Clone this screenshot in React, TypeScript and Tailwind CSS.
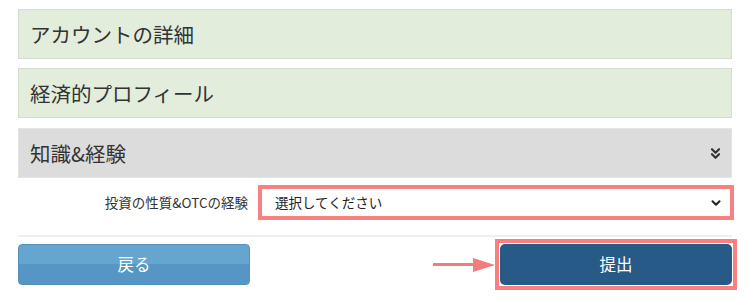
import React from "react";
import { ChevronsDown, ChevronDown } from "lucide-react";

export default function App() {
  return (
    <div className="w-[750px] h-[302px] bg-white overflow-hidden text-[#333] font-['Noto_Sans_CJK_JP','Noto_Sans',sans-serif]">
      <div className="flex flex-col px-[18px] pt-[9px]">
        <div className="h-[50px] border border-[#d3dccd] bg-[#e2eddc] flex items-center pl-[11px] text-[20.5px] leading-none">
          アカウントの詳細
        </div>
        <div className="mt-[9px] h-[50px] border border-[#d3dccd] bg-[#e2eddc] flex items-center pl-[11px] text-[20.5px] leading-none">
          経済的プロフィール
        </div>
        <div className="mt-[10px] h-[50px] border border-[#e4e4e4] bg-[#dcdcdc] flex items-center justify-between pl-[11px] pr-[7px] text-[20.5px] leading-none">
          <span>知識&amp;経験</span>
          <ChevronsDown className="w-[17px] h-[17px] text-[#333]" strokeWidth={3} />
        </div>
        <div className="mt-[7px] flex items-center -mr-[2px]">
          <div className="w-[230px] text-right text-[13.5px] text-[#333]">投資の性質&amp;OTCの経験</div>
          <div className="ml-[10px] flex-1 h-[35px] border-[4px] border-[#f88080] bg-white flex items-center justify-between pl-[13px] pr-[7px]">
            <span className="text-[13.5px] text-[#222]">選択してください</span>
            <ChevronDown className="w-[14px] h-[14px] text-[#222]" strokeWidth={3.5} />
          </div>
        </div>
        <div className="mt-[15px] h-[2px] bg-[#efefef]" />
        <div className="mt-[7px] flex items-center justify-between">
          <button className="w-[232px] h-[41px] rounded-[4px] border border-[#5590bd] bg-[linear-gradient(to_bottom,#65a5d0_50%,#5596c5_50%)] text-white text-[16.5px] flex items-center justify-center">
            戻る
          </button>
          <div className="relative -my-[5px] -mr-[5px] border-[4px] border-[#f88080] p-[1px] bg-white">
            <div className="absolute right-[calc(100%+4px)] top-1/2 -translate-y-1/2 flex items-center">
              <div className="w-[44px] h-[3px] bg-[#f47c7c]" />
              <div className="w-0 h-0 border-y-[7px] border-y-transparent border-l-[22px] border-l-[#f47c7c] -ml-[4px]" />
            </div>
            <button className="w-[232px] h-[41px] rounded-[5px] bg-[#285a88] text-white text-[16.5px] flex items-center justify-center">
              提出
            </button>
          </div>
        </div>
      </div>
    </div>
  );
}
